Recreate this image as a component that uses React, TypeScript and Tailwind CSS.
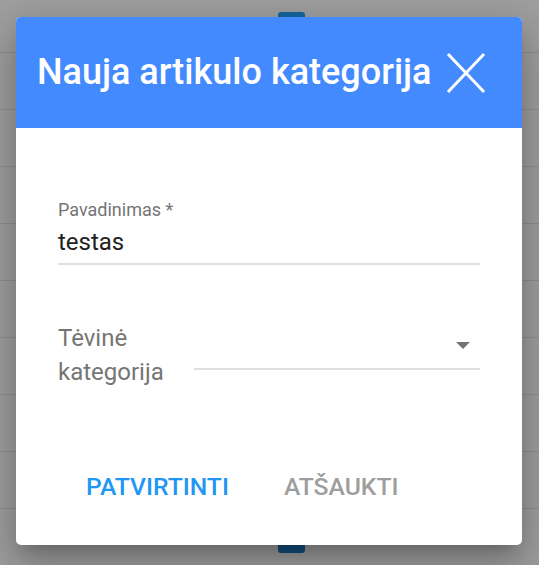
import React from "react";

export default function App() {
  const rows = Array.from({ length: 10 });
  return (
    <div
      className="relative w-[539px] h-[565px] overflow-hidden bg-[#9f9f9f]"
      style={{ fontFamily: "Roboto, 'Liberation Sans', sans-serif" }}
    >
      {/* background rows */}
      <div className="flex flex-col pt-[52px]">
        {rows.map((_, i) => (
          <div key={i} className="h-[57px] border-t border-[#8f8f8f]" />
        ))}
      </div>
      <div className="absolute left-[278px] top-[12px] w-[27px] h-[10px] rounded-[3px] bg-[#17659f]" />
      <div className="absolute left-[278px] top-[540px] w-[27px] h-[13px] rounded-[3px] bg-[#12507f]" />

      {/* dialog */}
      <div className="absolute left-[16px] top-[17px] w-[506px] h-[528px] rounded-[5px] bg-white overflow-hidden shadow-[0_11px_15px_-7px_rgba(0,0,0,0.2),0_24px_38px_3px_rgba(0,0,0,0.14),0_9px_46px_8px_rgba(0,0,0,0.12)] flex flex-col">
        <div className="h-[111px] bg-[#448aff] flex items-center pl-[21px] pr-[36px] justify-between">
          <span className="text-white text-[36px] font-medium leading-none pb-[2px] whitespace-nowrap">
            Nauja artikulo kategorija
          </span>
          <svg width="40" height="42" viewBox="0 0 40 42" className="shrink-0">
            <path d="M2 2 L38 40 M38 2 L2 40" stroke="white" strokeWidth="3" />
          </svg>
        </div>
        <div className="flex flex-col px-[42px] pt-[72px]">
          <div className="text-[18px] leading-[20px] text-[#757575]">Pavadinimas *</div>
          <div className="text-[24px] leading-[28px] text-[#212121] mt-[8px]">testas</div>
          <div className="h-[2px] bg-[#e0e0e0] mt-[7px]" />
          <div className="flex items-end mt-[56px]">
            <div className="w-[136px] text-[24px] leading-[34px] text-[#757575]">
              Tėvinė
              <br />
              kategorija
            </div>
            <div className="flex-1 flex flex-col mb-[19px]">
              <div className="flex justify-end pr-[10px] pb-[19px]">
                <svg width="14" height="7" viewBox="0 0 14 7">
                  <path d="M0 0 L14 0 L7 7 Z" fill="#757575" />
                </svg>
              </div>
              <div className="h-[2px] bg-[#e0e0e0]" />
            </div>
          </div>
          <div className="flex gap-[55px] mt-[86px] pl-[28px]">
            <span className="text-[24.7px] font-medium text-[#2196f3] leading-none">PATVIRTINTI</span>
            <span className="text-[24.7px] font-medium text-[#9e9e9e] leading-none">ATŠAUKTI</span>
          </div>
        </div>
      </div>
    </div>
  );
}
